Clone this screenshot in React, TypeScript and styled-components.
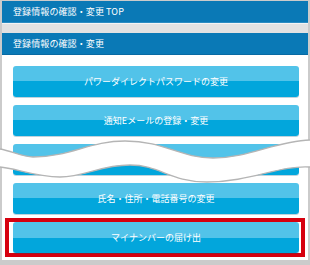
import React from 'react'
import styled, { createGlobalStyle } from 'styled-components'

const GlobalStyle = createGlobalStyle`
  html, body {
    margin: 0;
    padding: 0;
    background: #cbcbcb;
  }
  body {
    font-family: 'Noto Sans CJK JP', 'Noto Sans', sans-serif;
  }
`

const items = [
  'パワーダイレクトパスワードの変更',
  '通知Eメールの登録・変更',
  '登録情報の変更',
  '氏名・住所・電話番号の変更',
]

const Page = styled.div`
  position: relative;
  width: 310px;
  height: 265px;
  box-sizing: border-box;
  padding: 1px 2px 5px 2px;
`

const Panel = styled.div`
  height: 100%;
  background: #ffffff;
  display: flex;
  flex-direction: column;
`

const Bar = styled.div<{ $edge: string }>`
  height: 21px;
  display: flex;
  align-items: center;
  padding-left: 11px;
  background: #0a79b6;
  border-bottom: 1px solid ${(p) => p.$edge};
  color: #ffffff;
  font-size: 9px;
  letter-spacing: 0.1px;
`

const Gap = styled.div`
  height: 9px;
  background: #e2e2e2;
  border-top: 1px solid #f4f4f4;
`

const MenuList = styled.div`
  display: flex;
  flex-direction: column;
  gap: 8px;
  padding: 11px 9px 0 11px;
`

const MenuButton = styled.div`
  height: 31px;
  display: flex;
  align-items: center;
  justify-content: center;
  border-radius: 3px;
  background: linear-gradient(#52c3e9 0, #52c3e9 50%, #02a6dc 50%, #02a6dc 100%);
  box-shadow: 0 1px 0 rgba(0, 80, 120, 0.25);
  color: #ffffff;
  font-size: 9px;
`

const Highlight = styled.div`
  margin: -4px -6px -4px -8px;
  padding: 0 2px 0 4px;
  border: 4px solid #d6000f;
`

const Wave = styled.svg`
  position: absolute;
  left: 0;
  top: 0;
  pointer-events: none;
`

const upper = 'M0,149 C12,151 22,157 33,157 C70,157 90,141 125,141 C165,141 180,158 213,158 C250,158 275,141 310,140'
const lower = 'M310,167 C280,165 250,182 207,182 C170,182 160,165 130,165 C100,165 85,177 60,177 C35,177 15,168 0,167'

const App = () => {
  return (
    <>
      <GlobalStyle />
      <Page>
        <Panel>
          <Bar $edge="#2b8cc2">登録情報の確認・変更 TOP</Bar>
          <Gap />
          <Bar $edge="#086aa3">登録情報の確認・変更</Bar>
          <MenuList>
            {items.map((label) => (
              <MenuButton key={label}>{label}</MenuButton>
            ))}
            <Highlight>
              <MenuButton>マイナンバーの届け出</MenuButton>
            </Highlight>
          </MenuList>
        </Panel>
        <Wave width="310" height="265" viewBox="0 0 310 265">
          <path d={upper + ' L310,167 ' + lower.slice(lower.indexOf('C')) + ' Z'} fill="#ffffff" />
          <path d={upper} fill="none" stroke="#b5b5b5" strokeWidth="1.4" />
          <path d={lower} fill="none" stroke="#b5b5b5" strokeWidth="1.4" />
        </Wave>
      </Page>
    </>
  )
}

export default App
